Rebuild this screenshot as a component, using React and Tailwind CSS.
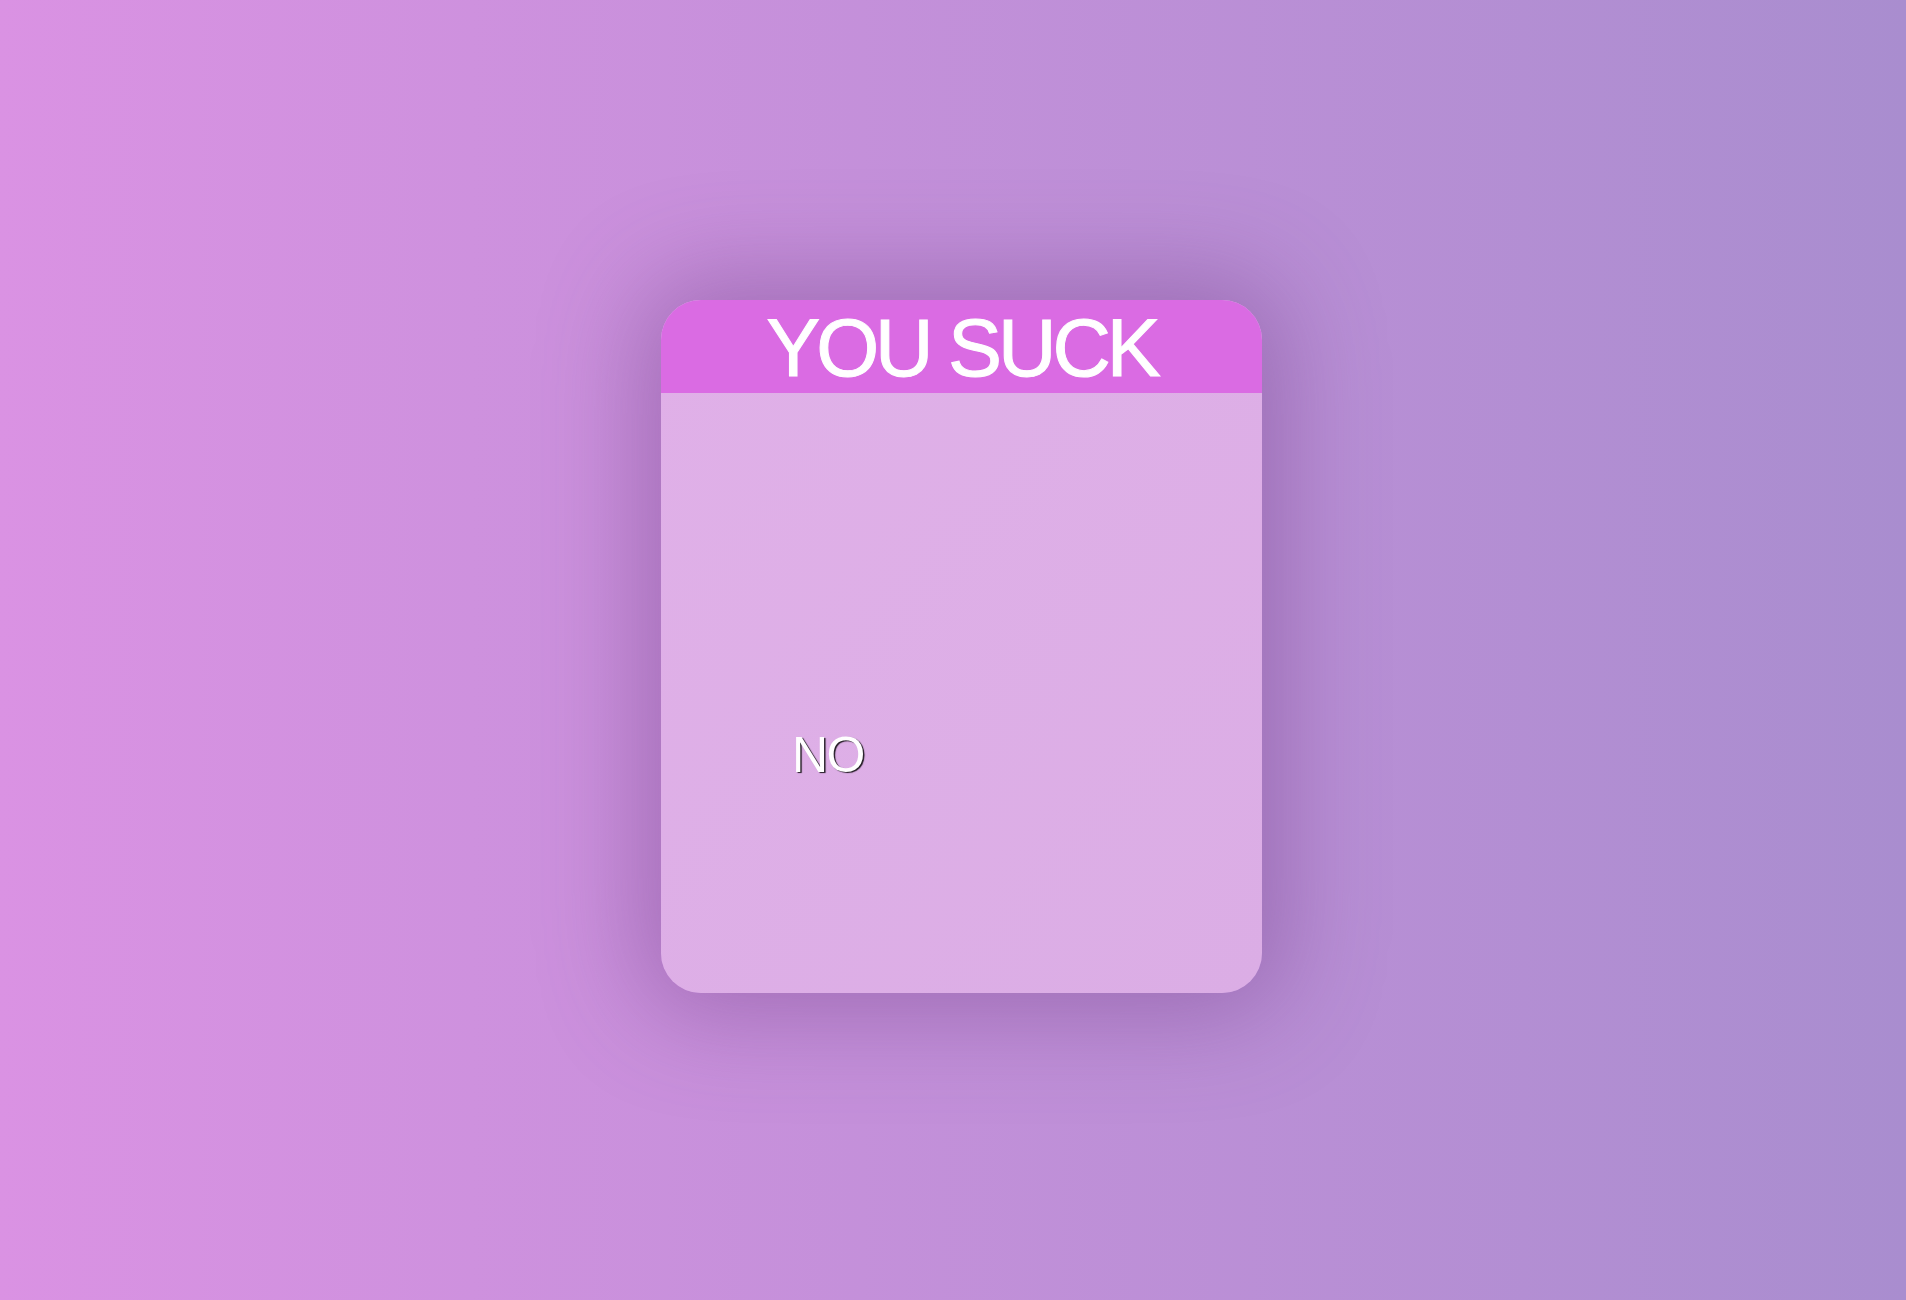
import React from "react";

const App = () => {
  return (
    <div className="w-full h-[1300px] flex items-center justify-center bg-gradient-to-r from-[#da92e3] to-[#a98dcf] font-['Liberation_Sans',Arial,sans-serif]">
      <div className="w-[601px] h-[693px] ml-[17px] -mt-[7px] rounded-[40px] overflow-hidden flex flex-col bg-gradient-to-br from-[#e0b0e8] to-[#dbade5] shadow-[0_0_100px_20px_rgba(110,60,130,0.42)]">
        <div className="h-[93px] shrink-0 bg-[#da6be3] flex items-center justify-center">
          <h1 className="text-white text-[81px] leading-none tracking-[-0.05em] pt-[3px] [-webkit-text-stroke:1px_#fff]">
            YOU SUCK
          </h1>
        </div>
        <div className="relative flex-1">
          <button className="absolute left-[131px] top-[337px] text-white text-[50px] leading-none tracking-[-0.03em] [text-shadow:1.5px_1px_1px_rgba(0,0,0,0.85)]">
            NO
          </button>
        </div>
      </div>
    </div>
  );
};

export default App;
